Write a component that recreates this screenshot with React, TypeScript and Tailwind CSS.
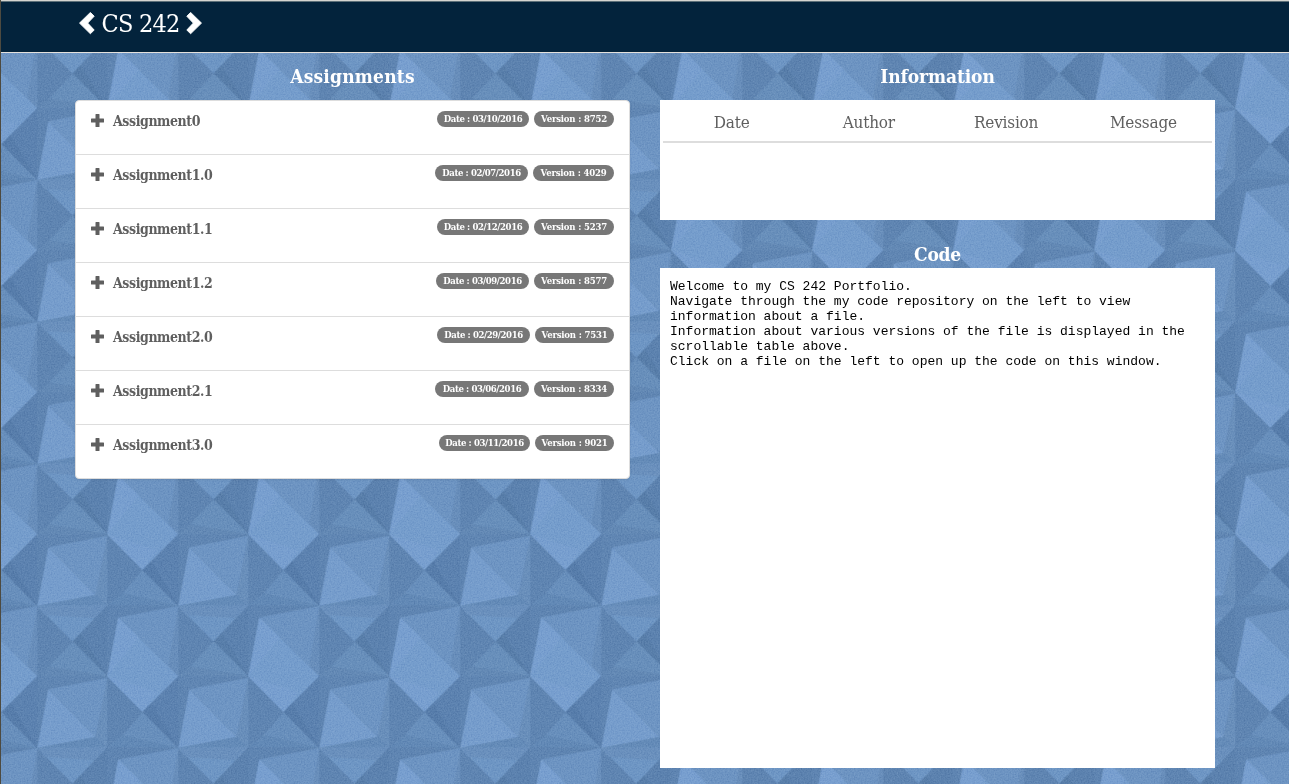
import React from "react";

const assignments = [
  { name: "Assignment0", date: "03/10/2016", version: "8752", dw: "w-[92px]", vw: "w-[80px]" },
  { name: "Assignment1.0", date: "02/07/2016", version: "4029", dw: "w-[93px]", vw: "w-[81px]" },
  { name: "Assignment1.1", date: "02/12/2016", version: "5237", dw: "w-[92px]", vw: "w-[80px]" },
  { name: "Assignment1.2", date: "03/09/2016", version: "8577", dw: "w-[93px]", vw: "w-[80px]" },
  { name: "Assignment2.0", date: "02/29/2016", version: "7531", dw: "w-[93px]", vw: "w-[79px]" },
  { name: "Assignment2.1", date: "03/06/2016", version: "8334", dw: "w-[94px]", vw: "w-[80px]" },
  { name: "Assignment3.0", date: "03/11/2016", version: "9021", dw: "w-[91px]", vw: "w-[79px]" },
];

const facets: [string, string][] = [
  ["0,0 213,0 106,107", "#759dcc"],
  ["0,0 150,48 106,107", "#789fcf"],
  ["106,107 213,215 46,177", "#688fbc"],
  ["46,177 213,215 0,212", "#6289b6"],
  ["106,107 213,0 213,215", "#5c82b0"],
  ["106,107 133,80 213,215", "#577dab"],
  ["213,0 424,0 246,39", "#6086b3"],
  ["246,39 388,182 213,215", "#769dcc"],
  ["246,39 424,4 388,182", "#6e95c3"],
  ["424,4 424,215 388,182", "#698fbb"],
  ["213,215 388,182 424,215", "#648bb8"],
  ["213,215 424,212 319,322", "#6e96c4"],
  ["213,215 424,212 388,252 235,242", "#6a90bd"],
  ["33,250 213,215 213,426", "#6d94c2"],
  ["213,215 213,426 183,394", "#688ebb"],
  ["33,250 213,426 0,426", "#759dcc"],
  ["33,250 95,310 0,426", "#789fcf"],
  ["319,322 424,212 424,426", "#5c82af"],
  ["319,322 343,297 424,426", "#587eaa"],
  ["319,322 424,426 248,397", "#688fbb"],
  ["248,397 424,426 213,426", "#6389b5"],
];

function Backdrop() {
  return (
    <svg className="absolute inset-0 h-full w-full" aria-hidden="true">
      <defs>
        <pattern id="facets" patternUnits="userSpaceOnUse" width="423" height="426" patternTransform="translate(107.3 108.3) scale(0.33333)">
          <rect width="424" height="426" fill="#5f85b2" />
          {facets.map(([points, fill]) => (
            <polygon key={points} points={points} fill={fill} />
          ))}
        </pattern>
        <filter id="grain" x="0" y="0" width="100%" height="100%" colorInterpolationFilters="sRGB">
          <feTurbulence type="fractalNoise" baseFrequency="0.7" numOctaves="2" seed="4" />
          <feColorMatrix values="1.2 0 0 0 -0.1  1.2 0 0 0 -0.1  1.2 0 0 0 -0.1  0 0 0 0 0.25" />
        </filter>
      </defs>
      <rect width="100%" height="100%" fill="url(#facets)" />
      <rect width="100%" height="100%" filter="url(#grain)" className="mix-blend-soft-light" />
    </svg>
  );
}

function Chevron({ flip = false }: { flip?: boolean }) {
  return (
    <svg width="16" height="24" viewBox="0 0 16 24" className={flip ? "-scale-x-100" : ""}>
      <path d="M0.5 11.1 11.4 0.4 15.2 4.2 8.7 11.1 15.2 18 11.4 21.8Z" fill="#fff" stroke="#fff" strokeWidth="0.9" strokeLinejoin="round" />
    </svg>
  );
}

function Plus() {
  return (
    <svg width="13" height="13" viewBox="0 0 13 13" className="mt-[13px] shrink-0">
      <path d="M4.5 .5Q4.5 0 5 0h3Q8.5 0 8.5 .5V4.6h4q.5 0 .5.5v2.8q0 .5-.5.5H8.5v4.1q0 .5-.5.5h-3Q4.5 13 4.5 12.5V8.4H.5Q0 8.4 0 7.9v-2.8Q0 4.6 .5 4.6H4.5Z" fill="#5f5f5f" />
    </svg>
  );
}

function Badge({ text, width, tracking }: { text: string; width: string; tracking: string }) {
  return (
    <span className={`flex h-4 items-center justify-center rounded-full bg-[#777] text-[9.5px] leading-none font-bold whitespace-nowrap text-white ${width} ${tracking}`}>
      {text}
    </span>
  );
}

export default function App() {
  return (
    <div className="relative h-[784px] w-full overflow-hidden bg-[#668dbc] font-['Roboto_Slab','DejaVu_Serif_Condensed','DejaVu_Serif',serif] text-[#5f5f5f]">
      <Backdrop />
      <div className="relative flex h-full flex-col border-l border-[#4d4a40]">
        <header className="flex h-[53px] shrink-0 items-start border-t border-b border-t-[#d5d5d0] border-b-[#e4e1dd] bg-[#03233c] pl-[78px] shadow-[inset_0_1px_0_#5d7079]">
          <a className="flex h-[45px] items-center text-[25px] leading-none text-white">
            <Chevron />
            <span className="mx-[5px] w-[81px] text-center tracking-[-0.8px] whitespace-nowrap">CS 242</span>
            <Chevron flip />
          </a>
        </header>

        <main className="flex gap-[30px] pl-[74px]">
          <section className="w-[555px]">
            <h2 className="flex h-[47px] items-center justify-center text-[19px] font-bold tracking-[0.2px] text-white">Assignments</h2>
            <ul className="overflow-hidden rounded-[4px] border border-[#ddd] bg-white shadow-[0_1px_2px_rgba(0,0,0,0.08)]">
              {assignments.map((a) => (
                <li key={a.name} className="flex h-[54px] items-start border-b border-[#ddd] pr-[15px] pl-[15px] last:h-[53px] last:border-b-0">
                  <Plus />
                  <span className="ml-[9px] pt-[10px] text-[14px] leading-5 font-bold tracking-[-0.43px]">{a.name}</span>
                  <span className="mt-[10px] ml-auto flex gap-[5px]">
                    <Badge text={`Date : ${a.date}`} width={a.dw} tracking="tracking-[-0.4px]" />
                    <Badge text={`Version : ${a.version}`} width={a.vw} tracking="tracking-[-0.2px]" />
                  </span>
                </li>
              ))}
            </ul>
          </section>

          <section className="w-[555px]">
            <h2 className="flex h-[47px] items-center justify-center text-[19px] font-bold tracking-[-0.1px] text-white">Information</h2>
            <div className="h-[120px] bg-white px-[3px]">
              <div className="grid h-[43px] grid-cols-4 border-b-2 border-[#ddd] text-center text-[17px] leading-[45px] tracking-[-0.2px]">
                <span>Date</span>
                <span>Author</span>
                <span>Revision</span>
                <span>Message</span>
              </div>
            </div>
            <h2 className="flex h-[48px] items-center justify-center pt-[20px] text-[19px] font-bold tracking-[-0.2px] text-white">Code</h2>
            <pre className="h-[500px] bg-white px-[10px] pt-[11px] font-['Courier_New','Liberation_Mono',monospace] text-[13px] leading-[15px] whitespace-pre text-black">
{`Welcome to my CS 242 Portfolio.
Navigate through the my code repository on the left to view
information about a file.
Information about various versions of the file is displayed in the
scrollable table above.
Click on a file on the left to open up the code on this window.`}
            </pre>
          </section>
        </main>
      </div>
    </div>
  );
}
